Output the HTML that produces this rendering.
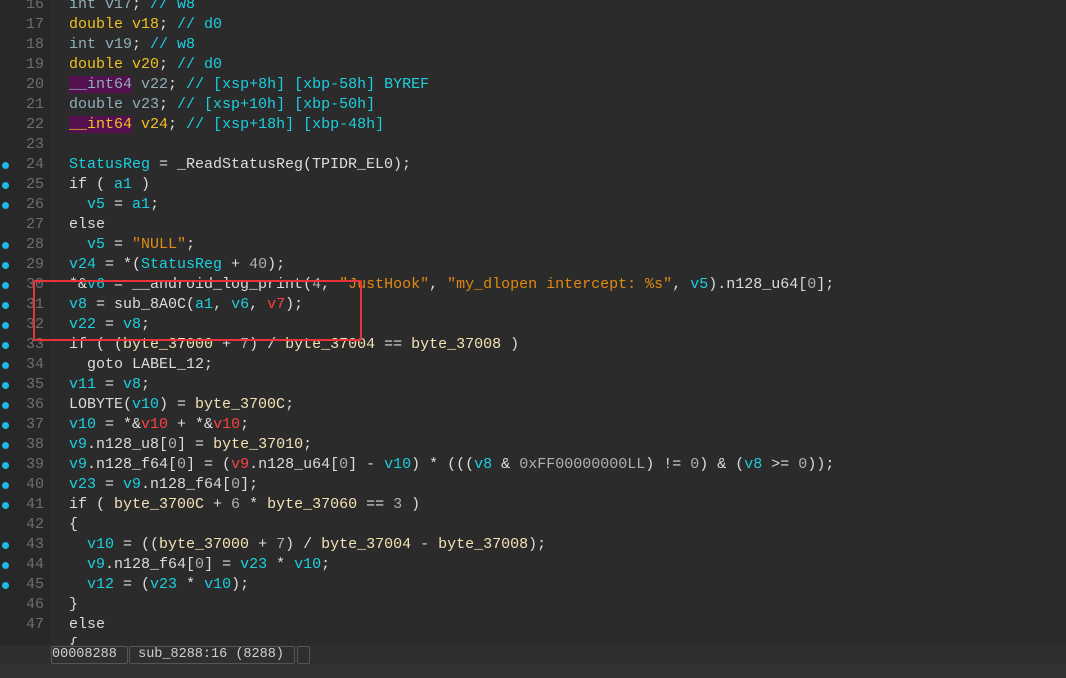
<!DOCTYPE html>
<html><head><meta charset="utf-8"><style>
body{margin:0;width:1066px;height:678px;overflow:hidden;background:#2b2b2b;font-family:"Liberation Mono",monospace;font-size:15px;}
#g{position:absolute;left:0;top:0;width:50px;height:645px;background:#282828;}
#code{position:absolute;left:0;top:-5px;}
.l{position:relative;height:20px;line-height:20px;white-space:pre;color:#dcdcdc;}
.n{position:absolute;left:10px;width:34px;text-align:right;color:#6e6e6e;}
.t{position:absolute;left:69px;}
.d{position:absolute;left:2px;top:7px;width:7px;height:7px;border-radius:50%;background:#1fb8e8;}
.c{color:#1ad0e0}.y{color:#f0c020}.o{color:#e08a10}.r{color:#ff4040}.g{color:#f2e2b4}.m{color:#b0b0b0}.k{color:#8fb0b8}.w{color:#dcdcdc}
.p{background:#55104f}
#box{position:absolute;left:33px;top:280px;width:325px;height:57px;border:2px solid #e8333a;border-radius:2px;}
#sb{position:absolute;left:0;top:645px;width:1066px;height:20px;background:#2f2f2f;}
#bt{position:absolute;left:0;top:665px;width:1066px;height:13px;background:#333;}
.bx{position:absolute;top:1px;height:16px;border:1px solid #555;border-radius:2px;color:#cfcfcf;line-height:16px;font-size:13.5px;white-space:pre;}
</style></head><body>
<div id="g"></div>
<div id="code">
<div class="l"><span class="n">16</span><span class="t k">int v17<span class="w">;</span> <span class="c">// w8</span></span></div>
<div class="l"><span class="n">17</span><span class="t y">double v18<span class="w">;</span> <span class="c">// d0</span></span></div>
<div class="l"><span class="n">18</span><span class="t k">int v19<span class="w">;</span> <span class="c">// w8</span></span></div>
<div class="l"><span class="n">19</span><span class="t y">double v20<span class="w">;</span> <span class="c">// d0</span></span></div>
<div class="l"><span class="n">20</span><span class="t k"><span class="p">__int64</span> v22<span class="w">;</span> <span class="c">// [xsp+8h] [xbp-58h] BYREF</span></span></div>
<div class="l"><span class="n">21</span><span class="t k">double v23<span class="w">;</span> <span class="c">// [xsp+10h] [xbp-50h]</span></span></div>
<div class="l"><span class="n">22</span><span class="t y"><span class="p">__int64</span> v24<span class="w">;</span> <span class="c">// [xsp+18h] [xbp-48h]</span></span></div>
<div class="l"><span class="n">23</span></div>
<div class="l"><span class="d"></span><span class="n">24</span><span class="t"><span class="c">StatusReg</span> = _ReadStatusReg(TPIDR_EL0);</span></div>
<div class="l"><span class="d"></span><span class="n">25</span><span class="t">if ( <span class="c">a1</span> )</span></div>
<div class="l"><span class="d"></span><span class="n">26</span><span class="t">  <span class="c">v5</span> = <span class="c">a1</span>;</span></div>
<div class="l"><span class="n">27</span><span class="t">else</span></div>
<div class="l"><span class="d"></span><span class="n">28</span><span class="t">  <span class="c">v5</span> = <span class="o">"NULL"</span>;</span></div>
<div class="l"><span class="d"></span><span class="n">29</span><span class="t"><span class="c">v24</span> = *(<span class="c">StatusReg</span> + <span class="m">40</span>);</span></div>
<div class="l"><span class="d"></span><span class="n">30</span><span class="t">*&amp;<span class="c">v6</span> = __android_log_print(<span class="m">4</span>, <span class="o">"JustHook"</span>, <span class="o">"my_dlopen intercept: %s"</span>, <span class="c">v5</span>).n128_u64[<span class="m">0</span>];</span></div>
<div class="l"><span class="d"></span><span class="n">31</span><span class="t"><span class="c">v8</span> = sub_8A0C(<span class="c">a1</span>, <span class="c">v6</span>, <span class="r">v7</span>);</span></div>
<div class="l"><span class="d"></span><span class="n">32</span><span class="t"><span class="c">v22</span> = <span class="c">v8</span>;</span></div>
<div class="l"><span class="d"></span><span class="n">33</span><span class="t">if ( (<span class="g">byte_37000</span> + <span class="m">7</span>) / <span class="g">byte_37004</span> == <span class="g">byte_37008</span> )</span></div>
<div class="l"><span class="d"></span><span class="n">34</span><span class="t">  goto LABEL_12;</span></div>
<div class="l"><span class="d"></span><span class="n">35</span><span class="t"><span class="c">v11</span> = <span class="c">v8</span>;</span></div>
<div class="l"><span class="d"></span><span class="n">36</span><span class="t">LOBYTE(<span class="c">v10</span>) = <span class="g">byte_3700C</span>;</span></div>
<div class="l"><span class="d"></span><span class="n">37</span><span class="t"><span class="c">v10</span> = *&amp;<span class="r">v10</span> + *&amp;<span class="r">v10</span>;</span></div>
<div class="l"><span class="d"></span><span class="n">38</span><span class="t"><span class="c">v9</span>.n128_u8[<span class="m">0</span>] = <span class="g">byte_37010</span>;</span></div>
<div class="l"><span class="d"></span><span class="n">39</span><span class="t"><span class="c">v9</span>.n128_f64[<span class="m">0</span>] = (<span class="r">v9</span>.n128_u64[<span class="m">0</span>] - <span class="c">v10</span>) * (((<span class="c">v8</span> &amp; <span class="m">0xFF00000000LL</span>) != <span class="m">0</span>) &amp; (<span class="c">v8</span> &gt;= <span class="m">0</span>));</span></div>
<div class="l"><span class="d"></span><span class="n">40</span><span class="t"><span class="c">v23</span> = <span class="c">v9</span>.n128_f64[<span class="m">0</span>];</span></div>
<div class="l"><span class="d"></span><span class="n">41</span><span class="t">if ( <span class="g">byte_3700C</span> + <span class="m">6</span> * <span class="g">byte_37060</span> == <span class="m">3</span> )</span></div>
<div class="l"><span class="n">42</span><span class="t">{</span></div>
<div class="l"><span class="d"></span><span class="n">43</span><span class="t">  <span class="c">v10</span> = ((<span class="g">byte_37000</span> + <span class="m">7</span>) / <span class="g">byte_37004</span> - <span class="g">byte_37008</span>);</span></div>
<div class="l"><span class="d"></span><span class="n">44</span><span class="t">  <span class="c">v9</span>.n128_f64[<span class="m">0</span>] = <span class="c">v23</span> * <span class="c">v10</span>;</span></div>
<div class="l"><span class="d"></span><span class="n">45</span><span class="t">  <span class="c">v12</span> = (<span class="c">v23</span> * <span class="c">v10</span>);</span></div>
<div class="l"><span class="n">46</span><span class="t">}</span></div>
<div class="l"><span class="n">47</span><span class="t">else</span></div>
<div class="l"><span class="t">{</span></div>
</div>
<div id="box"></div>
<div id="sb">
<div class="bx" style="left:51px;width:75px;">00008288</div>
<div class="bx" style="left:129px;width:164px;"> sub_8288:16 (8288)</div>
<div class="bx" style="left:297px;width:11px;"></div>
</div>
<div id="bt"></div>
</body></html>
